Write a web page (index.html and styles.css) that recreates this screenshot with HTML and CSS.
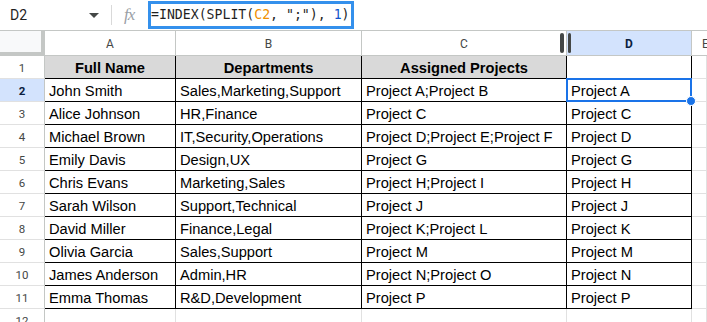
FILE: index.html
```html
<!DOCTYPE html>
<html>
<head>
<meta charset="utf-8">
<link rel="stylesheet" href="styles.css">
</head>
<body>
<div class="topbar">
  <div class="namebox">D2</div>
  <div class="caret"></div>
  <div class="sep"></div>
  <div class="fx">fx</div>
  <div class="formula">=INDEX(SPLIT(<span class="ref">C2</span>, ";"), <span class="num">1</span>)</div>
</div>
<div class="sheet">
  <div class="corner"></div>
  <div class="ch">A</div>
  <div class="ch">B</div>
  <div class="ch handle-host">C<span class="handle"></span></div>
  <div class="ch sel">D</div>
  <div class="ch ch-last">E</div>

  <div class="rh">1</div>
  <div class="c t hd">Full Name</div>
  <div class="c t hd">Departments</div>
  <div class="c t hd">Assigned Projects</div>
  <div class="c t"></div>
  <div class="c"></div>

  <div class="rh rsel">2</div>
  <div class="c t">John Smith</div>
  <div class="c t">Sales,Marketing,Support</div>
  <div class="c t">Project A;Project B</div>
  <div class="c t active">Project A</div>
  <div class="c"></div>

  <div class="rh">3</div>
  <div class="c t">Alice Johnson</div>
  <div class="c t">HR,Finance</div>
  <div class="c t">Project C</div>
  <div class="c t">Project C</div>
  <div class="c"></div>

  <div class="rh">4</div>
  <div class="c t">Michael Brown</div>
  <div class="c t">IT,Security,Operations</div>
  <div class="c t">Project D;Project E;Project F</div>
  <div class="c t">Project D</div>
  <div class="c"></div>

  <div class="rh">5</div>
  <div class="c t">Emily Davis</div>
  <div class="c t">Design,UX</div>
  <div class="c t">Project G</div>
  <div class="c t">Project G</div>
  <div class="c"></div>

  <div class="rh">6</div>
  <div class="c t">Chris Evans</div>
  <div class="c t">Marketing,Sales</div>
  <div class="c t">Project H;Project I</div>
  <div class="c t">Project H</div>
  <div class="c"></div>

  <div class="rh">7</div>
  <div class="c t">Sarah Wilson</div>
  <div class="c t">Support,Technical</div>
  <div class="c t">Project J</div>
  <div class="c t">Project J</div>
  <div class="c"></div>

  <div class="rh">8</div>
  <div class="c t">David Miller</div>
  <div class="c t">Finance,Legal</div>
  <div class="c t">Project K;Project L</div>
  <div class="c t">Project K</div>
  <div class="c"></div>

  <div class="rh">9</div>
  <div class="c t">Olivia Garcia</div>
  <div class="c t">Sales,Support</div>
  <div class="c t">Project M</div>
  <div class="c t">Project M</div>
  <div class="c"></div>

  <div class="rh">10</div>
  <div class="c t">James Anderson</div>
  <div class="c t">Admin,HR</div>
  <div class="c t">Project N;Project O</div>
  <div class="c t">Project N</div>
  <div class="c"></div>

  <div class="rh">11</div>
  <div class="c t">Emma Thomas</div>
  <div class="c t">R&amp;D,Development</div>
  <div class="c t">Project P</div>
  <div class="c t">Project P</div>
  <div class="c"></div>

  <div class="rh">12</div>
  <div class="c"></div>
  <div class="c"></div>
  <div class="c"></div>
  <div class="c"></div>
  <div class="c"></div>
</div>
</body>
</html>
```
FILE: styles.css
```css
* { box-sizing: border-box; }
html, body { margin: 0; padding: 0; background: #fff; overflow: hidden; }
body { width: 707px; height: 322px; font-family: "Liberation Sans", Arial, sans-serif; }

.topbar {
  height: 31px;
  border-bottom: 1px solid #c4c7c5;
  display: flex;
  align-items: center;
}
.namebox {
  width: 86px;
  padding-left: 10px;
  font-size: 14px;
  color: #1f1f1f;
  font-family: Roboto, "Liberation Sans", sans-serif;
}
.caret {
  width: 0; height: 0;
  border-left: 5px solid transparent;
  border-right: 5px solid transparent;
  border-top: 5px solid #444746;
  margin-left: 3px;
}
.sep {
  width: 1px; height: 20px;
  background: #d9d9d9;
  margin-left: 12px;
}
.fx {
  margin-left: 12px;
  width: 24px;
  font-family: "Liberation Serif", serif;
  font-style: italic;
  font-size: 17px;
  color: #9aa0a6;
  letter-spacing: -1px;
}
.formula {
  height: 28px;
  width: 206px;
  border: 3px solid #3490ec;
  font-family: "DejaVu Sans Mono", monospace;
  font-size: 13.2px;
  line-height: 22px;
  color: #1f1f1f;
  padding-left: 0;
  white-space: nowrap;
  overflow: hidden;
}
.formula .ref { color: #f09000; }
.formula .num { color: #1155cc; }

.sheet {
  display: grid;
  grid-template-columns: 45px 131px 186px 205px 125px 15px;
  grid-template-rows: 25px repeat(12, 23px);
}
.corner {
  background: #f8f9fa;
  border-right: 4px solid #c4c7c5;
  border-bottom: 4px solid #c4c7c5;
}
.ch {
  border-right: 1px solid #c4c7c5;
  border-bottom: 1px solid #c4c7c5;
  font-family: Roboto, "Liberation Sans", sans-serif;
  font-size: 12px;
  color: #444746;
  display: flex;
  align-items: center;
  justify-content: center;
  padding-top: 1px;
}
.ch-last { justify-content: flex-start; padding-left: 10px; border-right: none; overflow: hidden; }
.ch.sel { background: #d3e3fd; color: #0b1e3f; font-weight: bold; }
.handle-host { position: relative; }
.handle {
  position: absolute;
  right: 2px; top: 2px;
  width: 4px; height: 20px;
  border-radius: 2px;
  background: #444746;
}
.handle::after {
  content: "";
  position: absolute;
  left: 8px; top: 0;
  width: 3px; height: 20px;
  border-radius: 2px;
  background: #444746;
}

.rh {
  border-right: 1px solid #c4c7c5;
  border-bottom: 1px solid #e1e1e1;
  font-family: Roboto, "Liberation Sans", sans-serif;
  font-size: 11.5px;
  color: #444746;
  display: flex;
  align-items: center;
  justify-content: center;
  padding-top: 1px;
}
.rh.rsel { background: #d3e3fd; color: #0b1e3f; font-weight: bold; }

.c {
  border-right: 1px solid #e1e1e1;
  border-bottom: 1px solid #e1e1e1;
  font-size: 14.67px;
  line-height: 22px;
  padding: 1px 3px 0 4px;
  color: #000;
  white-space: nowrap;
}
.c.t { border-right-color: #000; border-bottom-color: #000; }
.c.hd { background: #d9d9d9; font-weight: bold; text-align: center; padding-left: 3px; }
.active { position: relative; }
.active::before {
  content: "";
  position: absolute;
  top: -1px; left: -1px; right: -1px; bottom: -1px;
  border: 2px solid #1a73e8;
}
.active::after {
  content: "";
  position: absolute;
  right: -5px; bottom: -5px;
  width: 8px; height: 8px;
  border-radius: 50%;
  background: #1a73e8;
  border: 1px solid #fff;
}
```
